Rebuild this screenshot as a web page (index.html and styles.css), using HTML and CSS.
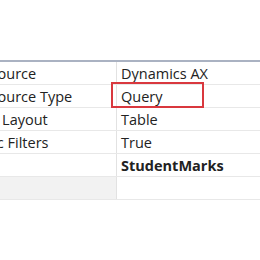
FILE: index.html
```
<!DOCTYPE html>
<html>
<head>
<meta charset="utf-8">
<link rel="stylesheet" href="styles.css">
</head>
<body>
<div class="top"></div>
<div class="grid">
  <div class="row"><div class="key"><span class="lbl">Data Source</span></div><div class="val">Dynamics AX</div></div>
  <div class="row"><div class="key"><span class="lbl">Data Source Type</span></div><div class="val"><span class="hl">Query</span></div></div>
  <div class="row"><div class="key"><span class="lbl lbl-layout">Default Layout</span></div><div class="val">Table</div></div>
  <div class="row"><div class="key"><span class="lbl lbl-filters">Dynamic Filters</span></div><div class="val">True</div></div>
  <div class="row"><div class="key"><span class="lbl">Name</span></div><div class="val bold">StudentMarks</div></div>
  <div class="row grey"><div class="key"><span class="lbl"></span></div><div class="val"></div></div>
</div>
</body>
</html>
```
FILE: styles.css
```
html, body { margin: 0; padding: 0; background: #fff; }
body { width: 260px; height: 260px; overflow: hidden; font-family: "Open Sans", "Noto Sans", sans-serif; font-size: 14.5px; color: #222; }
.top { height: 60px; border-bottom: 2px solid #aab2c2; }
.grid { display: flex; flex-direction: column; }
.row { display: grid; grid-template-columns: 117px 1fr; height: 22px; border-bottom: 1px solid #e8e8e8; }
.key { border-right: 1px solid #e2e2e2; overflow: hidden; display: flex; align-items: center; }
.lbl { white-space: nowrap; margin-left: -46px; }
.lbl-layout { margin-left: -51px; }
.lbl-filters { margin-left: -55px; }
.val { display: flex; align-items: center; padding-left: 4px; white-space: nowrap; position: relative; }
.bold { font-weight: 700; }
.hl::after { content: ""; position: absolute; left: -6px; top: -3px; width: 89px; height: 22px; border: 2px solid #d9383e; }
.grey { height: 22px; background: #f2f2f2; }
.grey .val { background: #fff; }
```
